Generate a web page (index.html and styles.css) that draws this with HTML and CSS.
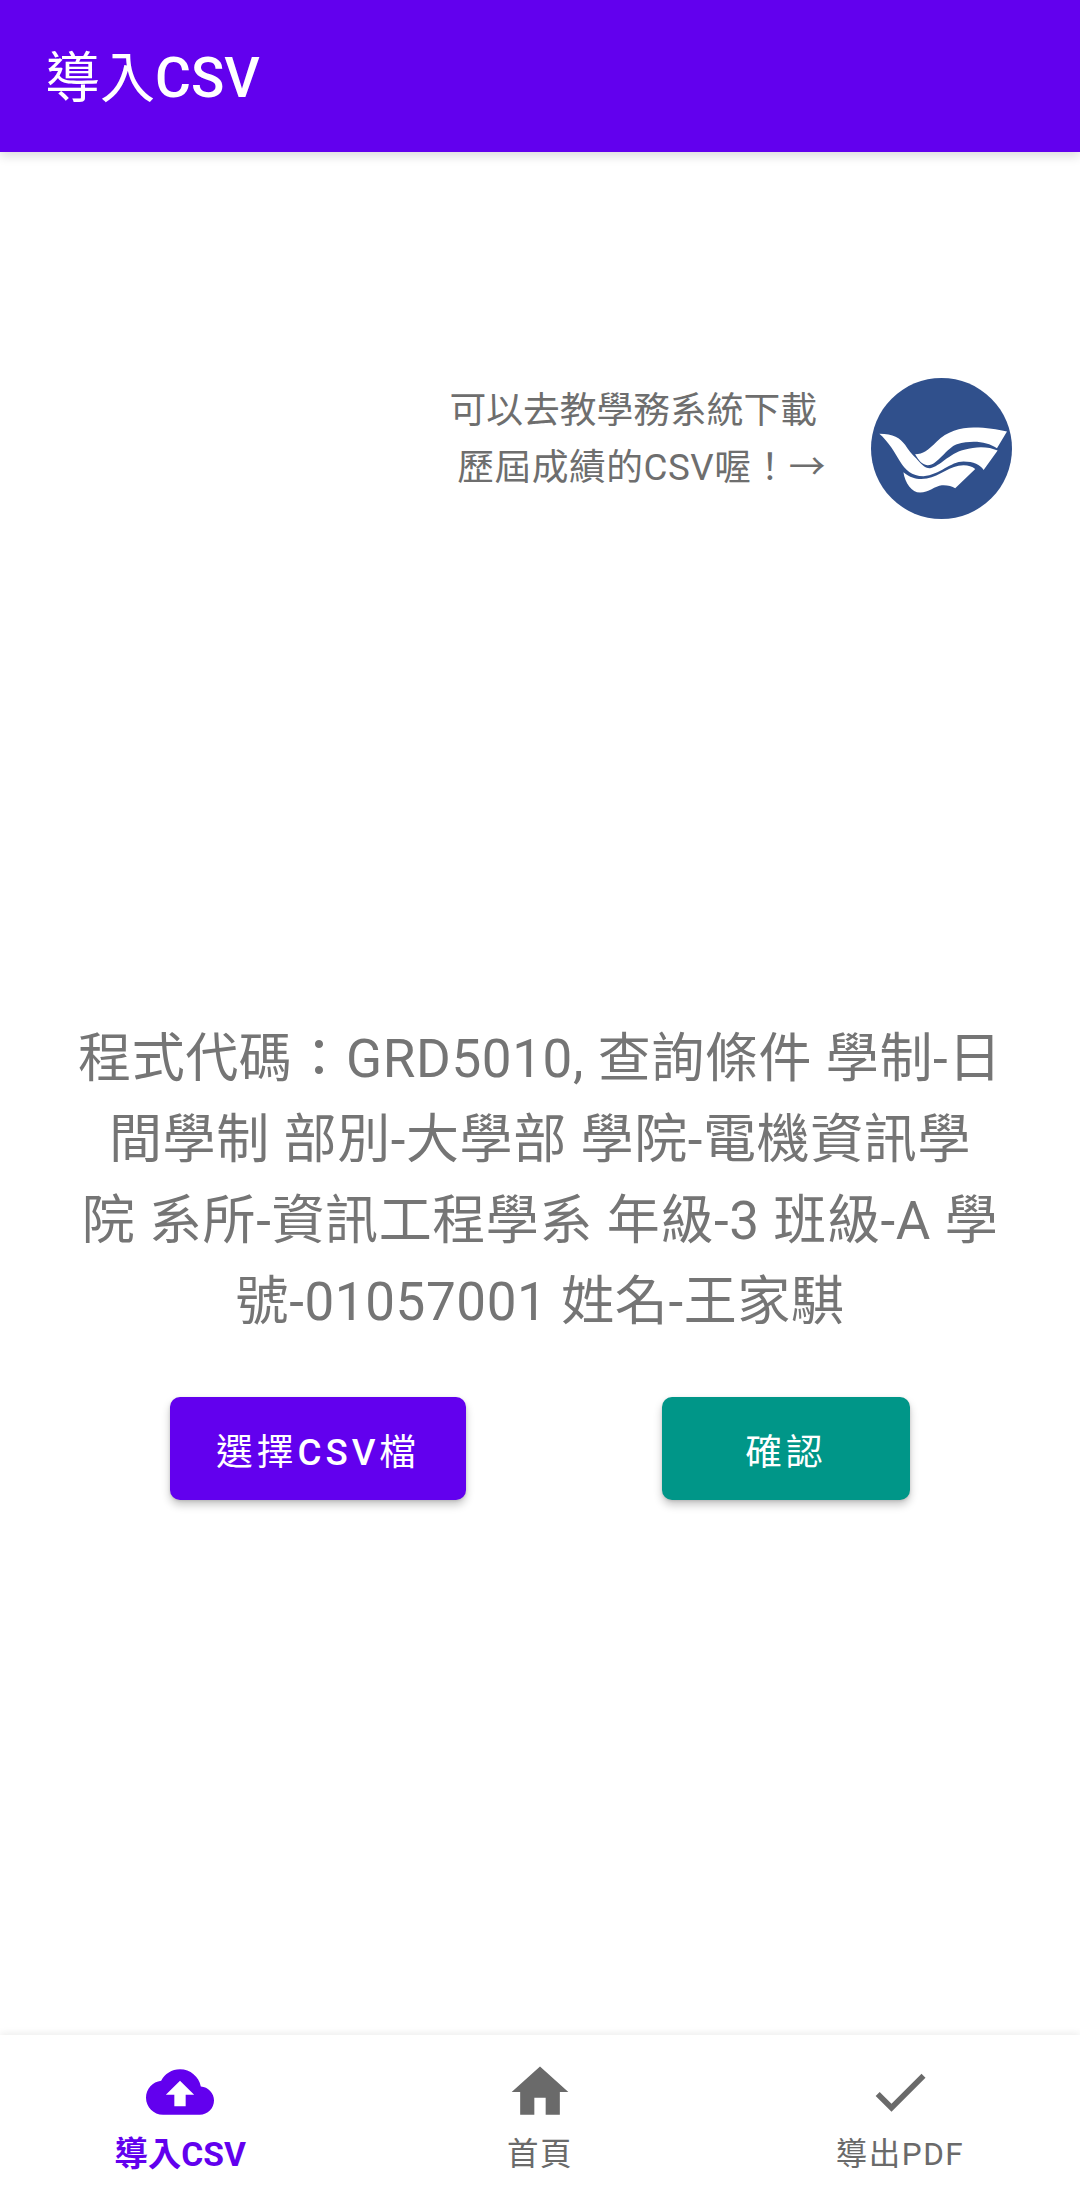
FILE: index.html
```html
<!DOCTYPE html>
<html lang="zh-Hant">
<head>
<meta charset="utf-8">
<title>導入CSV</title>
<link rel="stylesheet" href="styles.css">
</head>
<body>
<div class="app">
  <header class="appbar"><h1 class="appbar-title">導入<span class="latin">CSV</span></h1></header>
  <main class="content">
    <section class="hint">
      <p class="hint-text">
        <span class="hint-line hint-line-first">可以去教學務系統下載</span>
        <span class="hint-line hint-line-second">歷屆成績的CSV喔！→</span>
      </p>
      <svg class="logo" viewBox="93 55 422 422" aria-label="logo">
        <circle cx="304" cy="266" r="211" fill="#30508c"/>
        <path fill="#fff" d="M225 283C250 283 262 272 290 245C320 215 360 203 400 203C440 203 470 208 500 215L470 265C440 246 400 240 350 253C320 263 290 318 262 316C245 314 235 300 225 283Z"/>
        <path fill="#fff" d="M118 222C160 222 180 235 195 255C205 270 215 285 228 295C240 310 255 326 270 325C300 320 325 282 372 270C410 258 445 260 472 272L430 330C420 315 400 305 370 305C330 305 300 345 250 349C215 349 195 330 180 305C165 280 145 245 118 222Z"/>
        <path fill="#fff" d="M190 337C215 357 235 359 260 356C300 349 330 316 370 316C385 316 395 320 405 327L345 385C335 378 320 375 305 376C285 378 265 398 240 398C215 398 195 370 190 337Z"/>
      </svg>
    </section>
    <p class="query">程式代碼：GRD5010, 查詢條件 學制-日<br>間學制 部別-大學部 學院-電機資訊學<br>院 系所-資訊工程學系 年級-3 班級-A 學<br>號-01057001 姓名-王家騏</p>
    <div class="actions">
      <button class="btn btn-primary" type="button">選擇<span class="latin">CSV</span>檔</button>
      <button class="btn btn-confirm" type="button">確認</button>
    </div>
  </main>
  <nav class="bottom-nav">
    <a class="tab tab-active">
      <svg class="tab-icon" viewBox="0 0 24 24"><path d="M19.35 10.04C18.67 6.59 15.64 4 12 4 9.11 4 6.6 5.64 5.35 8.04 2.34 8.36 0 10.91 0 14c0 3.31 2.69 6 6 6h13c2.76 0 5-2.24 5-5 0-2.64-2.05-4.78-4.65-4.96zM14 13v4h-4v-4H7l5-5 5 5h-3z"/></svg>
      <span class="tab-label">導入CSV</span>
    </a>
    <a class="tab">
      <svg class="tab-icon" viewBox="0 0 24 24"><path d="M10 20v-6h4v6h5v-8h3L12 3 2 12h3v8h5z"/></svg>
      <span class="tab-label">首頁</span>
    </a>
    <a class="tab">
      <svg class="tab-icon" viewBox="0 0 24 24"><path d="M9 16.17L4.83 12l-1.42 1.41L9 19 21 7l-1.41-1.41z"/></svg>
      <span class="tab-label">導出PDF</span>
    </a>
  </nav>
</div>
</body>
</html>
```
FILE: styles.css
```css
* { box-sizing: border-box; }
html, body { margin: 0; padding: 0; background: #fff; }
body { font-family: Roboto, "Noto Sans CJK TC", sans-serif; }
.app { width: 1080px; height: 2192px; display: flex; flex-direction: column; overflow: hidden; }
.latin { font-weight: 500; }

.appbar {
  height: 152px; flex: none; background: #6200ee; display: flex; align-items: center;
  padding: 4px 0 0 45px; box-shadow: 0 4px 10px rgba(0,0,0,.14); position: relative; z-index: 1;
}
.appbar-title { margin: 0; font-size: 55px; font-weight: 400; color: #fff; line-height: 1; }

.content { flex: 1; display: flex; flex-direction: column; align-items: center; }

.hint { align-self: stretch; display: flex; justify-content: flex-end; align-items: center; gap: 45px; padding: 226px 68px 0 0; }
.hint-text { margin: 0 0 20px; font-size: 36.75px; line-height: 57px; color: #6e6e6e; text-align: right; }
.hint-line { display: block; }
.hint-line-first { padding-right: 9px; }
.hint-line-second { letter-spacing: .5px; }
.logo { width: 141px; height: 141px; flex: none; }

.query {
  margin: 500px 0 0; width: 1000px; font-size: 53px; letter-spacing: .6px; line-height: 81px; color: #757575; text-align: center;
}

.actions { margin-top: 54px; display: flex; gap: 196px; }
.btn {
  height: 103px; border: 0; border-radius: 10px; color: #fff; font-family: inherit; font-size: 36.75px; font-weight: 400;
  letter-spacing: 4px; box-shadow: 0 5px 9px rgba(0,0,0,.22), 0 1px 3px rgba(0,0,0,.12); padding: 0;
}
.btn-primary { width: 296px; background: #6200ee; }
.btn-confirm { width: 248px; background: #009688; }

.bottom-nav {
  height: 157px; flex: none; display: flex; background: #fff; box-shadow: 0 -2px 7px rgba(0,0,0,.07);
}
.tab { flex: 1; display: flex; flex-direction: column; align-items: center; padding-top: 23px; color: #6a6a6a; }
.tab-icon { width: 68px; height: 68px; fill: currentColor; display: block; }
.tab-label { font-size: 31.5px; line-height: 40px; margin-top: 9px; letter-spacing: 1.5px; }
.tab-active { color: #6200ee; }
.tab-active .tab-label { font-size: 33.6px; font-weight: 700; letter-spacing: 0; }
```
